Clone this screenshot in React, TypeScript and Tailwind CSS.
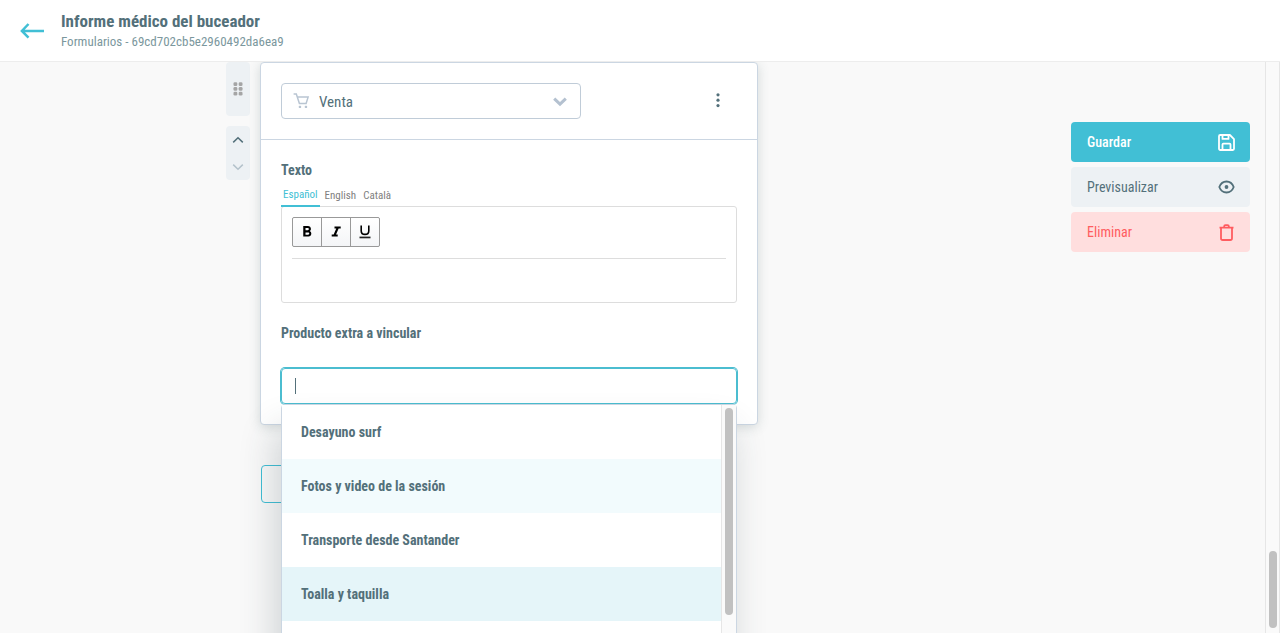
import React from "react";

const tabs = ["Español", "English", "Català"];

const products = [
  { name: "Desayuno surf", tone: "bg-white" },
  { name: "Fotos y video de la sesión", tone: "bg-[#f2fbfd]" },
  { name: "Transporte desde Santander", tone: "bg-white" },
  { name: "Toalla y taquilla", tone: "bg-[#e5f5f9]" },
  { name: "", tone: "bg-white" },
];

function Header() {
  return (
    <header className="flex h-[62px] shrink-0 items-center gap-4 border-b border-[#ededed] bg-white px-5">
      <a href="#volver" aria-label="Volver" className="text-[#41bfd5]">
        <svg width="25" height="16" viewBox="0 0 25 16" fill="none" stroke="currentColor" strokeWidth="2.5">
          <path d="M8.5 1 1.9 7.9l6.600 6.800M1.700 7.900H24" />
        </svg>
      </a>
      <div className="pt-0.5">
        <h1 className="text-[17px] leading-5 font-bold">Informe médico del buceador</h1>
        <p className="text-[13px] leading-[21px] text-[#7b979d]">Formularios - 69cd702cb5e2960492da6ea9</p>
      </div>
    </header>
  );
}

function DragHandle() {
  return (
    <button aria-label="Arrastrar" className="flex h-[54px] w-6 items-center justify-center rounded bg-[#edf1f4]">
      <svg width="10" height="14" viewBox="0 0 10 14" fill="#a5a5a5">
        <rect x="0.5" y="0.3" width="3.8" height="3.8" rx="1.3" />
        <rect x="5.7" y="0.3" width="3.8" height="3.8" rx="1.3" />
        <rect x="0.5" y="5" width="3.8" height="3.8" rx="1.3" />
        <rect x="5.7" y="5" width="3.8" height="3.8" rx="1.3" />
        <rect x="0.5" y="9.7" width="3.8" height="3.8" rx="1.3" />
        <rect x="5.7" y="9.7" width="3.8" height="3.8" rx="1.3" />
      </svg>
    </button>
  );
}

function OrderButtons() {
  return (
    <div className="flex h-[54px] w-6 flex-col rounded bg-[#edf1f4]">
      <button aria-label="Subir" className="flex flex-1 items-center justify-center">
        <svg width="12" height="8" viewBox="0 0 12 8" fill="none" stroke="#53707a" strokeWidth="1.5">
          <path d="M1.2 6.4 6 1.7l4.800 4.700" />
        </svg>
      </button>
      <button aria-label="Bajar" disabled className="flex flex-1 items-center justify-center">
        <svg width="12" height="8" viewBox="0 0 12 8" fill="none" stroke="#b4c2cb" strokeWidth="1.5">
          <path d="M1.2 1.6 6 6.3l4.800-4.700" />
        </svg>
      </button>
    </div>
  );
}

function TypeSelect() {
  return (
    <div className="relative w-[300px]">
      <select
        aria-label="Tipo de bloque"
        className="h-9 w-full appearance-none rounded-[4px] border border-[#c0ccd8] bg-white pt-0.5 pr-10 pl-[37px] text-[15px] outline-none"
      >
        <option>Venta</option>
      </select>
      <svg className="pointer-events-none absolute top-2.5 left-3" width="17" height="17" viewBox="0 0 17 17" fill="none" stroke="#b9c5d2" strokeWidth="1.5">
        <path d="M.6 1.100h2.700l3.100 9.400h6.700l2-6.400H4.300" />
        <rect x="5.800" y="12.800" width="2.300" height="2.300" rx=".6" fill="#b9c5d2" stroke="none" />
        <rect x="11.800" y="12.800" width="2.300" height="2.300" rx=".6" fill="#b9c5d2" stroke="none" />
      </svg>
      <svg className="pointer-events-none absolute top-3.5 right-[13px]" width="16" height="10" viewBox="0 0 16 10" fill="none" stroke="#b4c1d0" strokeWidth="3">
        <path d="M2.200 1.600 8 7.200l5.800-5.600" />
      </svg>
    </div>
  );
}

function FormatButton({ label, children }: { label: string; children: React.ReactNode }) {
  return (
    <button aria-label={label} className="flex h-7 w-7 items-center justify-center bg-gradient-to-b from-white to-[#f4f5f7]">
      <svg width="18" height="18" viewBox="0 0 18 18" fill="#000">
        {children}
      </svg>
    </button>
  );
}

function RichText() {
  return (
    <div className="-mt-px rounded-[3px] border border-[#ddd] bg-white px-2.5 pt-2.5">
      <div className="border-b border-[#ddd] pb-[11px]">
        <div className="flex w-fit gap-px overflow-hidden rounded-[2px] border border-[#999] bg-[#999]">
          <FormatButton label="Negrita">
            <path d="M11.7 8.09c.73-.5 1.24-1.33 1.24-2.09 0-1.69-1.31-3-3-3H5.25v10.5h5.28c1.57 0 2.78-1.28 2.78-2.84 0-1.14-.64-2.11-1.61-2.57zM7.5 4.88h2.25c.62 0 1.13.5 1.13 1.12s-.5 1.13-1.13 1.13H7.5V4.88zm2.63 6.75H7.5V9.38h2.63c.62 0 1.12.5 1.12 1.12s-.5 1.13-1.12 1.13z" />
          </FormatButton>
          <FormatButton label="Cursiva">
            <path d="M7.5 3.500v2h1.760l-2.600 6H4.700v2h6v-2H9.040l2.600-6h2.060v-2z" />
          </FormatButton>
          <FormatButton label="Subrayado">
            <path d="M5.200 2.500v5.200c0 2.300 1.500 3.700 3.800 3.700s3.800-1.400 3.800-3.700V2.500" fill="none" stroke="#000" strokeWidth="1.6" />
            <rect x="3.500" y="13.600" width="11" height="1.700" fill="#222" />
          </FormatButton>
        </div>
      </div>
      <textarea aria-label="Texto" className="block h-[43px] w-full resize-none py-2 text-sm outline-none" />
    </div>
  );
}

function ProductPicker() {
  return (
    <div className="relative">
      <input
        id="producto"
        role="combobox"
        aria-expanded="true"
        aria-controls="productos"
        className="block h-9 w-full rounded-[4px] border border-[#4bbdd0] px-3.5 text-sm caret-transparent ring-1 ring-[#4bbdd0] outline-none"
      />
      <span className="absolute top-2.5 left-3.5 h-4 w-px bg-[#53707a]" />
      <div className="absolute top-full right-0 left-0 z-10 flex rounded-[4px] border border-[#cbd6e2] bg-white shadow-[-6px_24px_36px_rgba(40,60,70,0.2)]">
        <ul id="productos" role="listbox" className="flex-1">
          {products.map((p) => (
            <li key={p.name} role="option" aria-selected={false} className={"flex h-[54px] items-center px-[19px] text-sm font-bold " + p.tone}>
              {p.name}
            </li>
          ))}
        </ul>
        <div className="w-[15px] border-l border-[#e6e6e6] bg-[#fafafa] px-[3px] pt-[3px]">
          <div className="h-[207px] w-2 rounded-full bg-[#c1c1c1]" />
        </div>
      </div>
    </div>
  );
}

function BlockCard() {
  return (
    <section className="rounded-[4px] border border-[#cbd6e2] bg-white shadow-[0_2px_12px_rgba(60,90,90,0.2)]">
      <div className="flex items-center justify-between border-b border-[#cbd6e2] p-5">
        <TypeSelect />
        <button aria-label="Más opciones" className="mr-[13px] flex h-9 w-3 items-center justify-center">
          <svg width="4" height="16" viewBox="0 0 4 16" fill="#53707a">
            <circle cx="2" cy="1.800" r="1.600" />
            <circle cx="2" cy="7.200" r="1.600" />
            <circle cx="2" cy="12.600" r="1.600" />
          </svg>
        </button>
      </div>
      <div className="p-5">
        <h2 className="text-sm leading-5 font-bold">Texto</h2>
        <div className="flex h-[27px] gap-[3px]">
          {tabs.map((t, i) => (
            <button
              key={t}
              className={
                i === 0
                  ? "relative z-[1] border-b-2 border-[#41bfd5] px-0.5 pt-1.5 text-[11px] text-[#41bfd5]"
                  : "px-0.5 pt-1.5 text-[11px] text-[#808080]"
              }
            >
              {t}
            </button>
          ))}
        </div>
        <RichText />
        <label htmlFor="producto" className="mt-5 mb-[25px] block text-sm leading-5 font-bold">
          Producto extra a vincular
        </label>
        <ProductPicker />
      </div>
    </section>
  );
}

function Actions() {
  return (
    <aside className="flex w-[194px] shrink-0 flex-col gap-[5px] pt-[60px] pr-[15px] text-sm">
      <button className="flex h-10 items-center justify-between rounded-[4px] bg-[#41bfd5] pr-[15px] pl-4 font-medium text-white">
        Guardar
        <svg width="17" height="17" viewBox="0 0 17 17" fill="none" stroke="currentColor" strokeWidth="1.8" strokeLinejoin="round">
          <path d="M2.200 1h9.700L16 5.100v9.700c0 .7-.5 1.200-1.200 1.200H2.200C1.500 16 1 15.500 1 14.800V2.200C1 1.500 1.500 1 2.200 1z" />
          <path d="M4.500 1v3.900h6V1M4.500 16v-5.400c0-.6.3-.9.900-.9h6.200c.6 0 .9.300.9.900V16" />
        </svg>
      </button>
      <button className="flex h-10 items-center justify-between rounded-[4px] bg-[#edf1f4] pr-[15px] pl-4">
        Previsualizar
        <svg width="17" height="14" viewBox="0 0 17 14" fill="none" stroke="currentColor" strokeWidth="1.8">
          <path d="M1.300 7C2.700 3.300 5.400 1.500 8.500 1.500S14.300 3.300 15.700 7C14.300 10.700 11.600 12.500 8.500 12.500S2.700 10.700 1.300 7z" />
          <circle cx="8.500" cy="7" r="1.900" fill="currentColor" stroke="none" />
        </svg>
      </button>
      <button className="flex h-10 items-center justify-between rounded-[4px] bg-[#ffdede] pr-[15px] pl-4 text-[#ff5c60]">
        Eliminar
        <svg width="17" height="17" viewBox="0 0 17 17" fill="none" stroke="currentColor" strokeWidth="1.8">
          <path d="M1.500 3.700h14M3 3.700v10.500c0 1.100.6 1.800 1.700 1.800h7.600c1.100 0 1.700-.7 1.700-1.800V3.700M6.200 3.500V2.300c0-.8.4-1.200 1.200-1.200h2.200c.8 0 1.200.4 1.200 1.200v1.200" />
        </svg>
      </button>
    </aside>
  );
}

export default function App() {
  return (
    <div className="flex h-screen flex-col overflow-hidden bg-[#f9f9f9] font-['Roboto_Condensed','Liberation_Sans_Narrow',Roboto,sans-serif] text-[#53707a]">
      <Header />
      <div className="flex min-h-0 flex-1">
        <main className="flex min-w-0 flex-1 overflow-hidden">
          <div className="flex min-w-0 flex-1 justify-center pr-[87px]">
            <div className="flex w-full max-w-[532px] gap-2.5">
              <div className="flex flex-col gap-2.5">
                <DragHandle />
                <OrderButtons />
              </div>
              <div className="min-w-0 flex-1">
                <BlockCard />
                <button aria-label="Añadir bloque" className="mt-10 ml-px h-[38px] w-60 rounded-[4px] border border-[#41bfd5]" />
              </div>
            </div>
          </div>
          <Actions />
        </main>
        <div className="flex w-[15px] flex-col justify-end border-x border-[#e6e6e6] bg-[#fafafa] px-[3px] pb-[5px]">
          <div className="h-[77px] w-2 rounded-full bg-[#c1c1c1]" />
        </div>
      </div>
    </div>
  );
}
